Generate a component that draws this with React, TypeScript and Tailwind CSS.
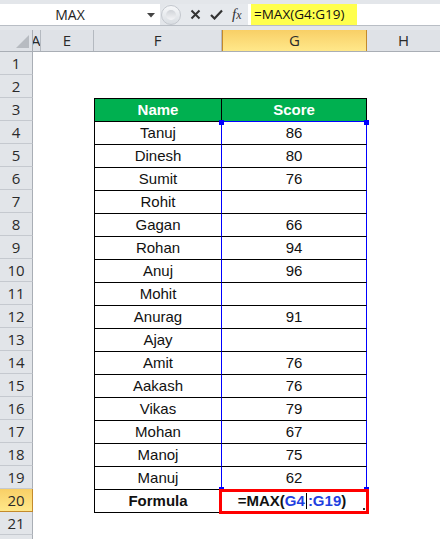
import React from 'react'

const font = { fontFamily: '"Liberation Sans", Arial, sans-serif' }
const uiFont = { fontFamily: '"Open Sans", "Noto Sans", sans-serif' }

const people: [string, string][] = [
  ['Tanuj', '86'],
  ['Dinesh', '80'],
  ['Sumit', '76'],
  ['Rohit', ''],
  ['Gagan', '66'],
  ['Rohan', '94'],
  ['Anuj', '96'],
  ['Mohit', ''],
  ['Anurag', '91'],
  ['Ajay', ''],
  ['Amit', '76'],
  ['Aakash', '76'],
  ['Vikas', '79'],
  ['Mohan', '67'],
  ['Manoj', '75'],
  ['Manuj', '62'],
]

function FormulaBar() {
  return (
    <div className="h-[30px] bg-[#e3e6ea] pt-[4px]">
      <div className="flex h-[22px] border-b border-[#b9bec5]">
        {/* name box */}
        <div className="relative flex w-[160px] items-center justify-center bg-white pr-[20px] text-[14px] text-[#1e1e1e]" style={uiFont}>
          MAX
          <svg className="absolute left-[147px] top-[9px]" width="8" height="5" viewBox="0 0 8 5">
            <path d="M0 0 L8 0 L4 4.5 Z" fill="#444" />
          </svg>
        </div>
        {/* buttons */}
        <div className="flex w-[88px] items-center rounded-l-full bg-[#e6e9ed]">
          <div className="ml-[1px] h-[20px] w-[20px] rounded-full border border-[#c3c7cd] bg-gradient-to-b from-[#f7f8fa] to-[#d9dde2] p-[4px]">
            <div className="h-full w-full rounded-full bg-gradient-to-b from-[#d0d3d8] to-[#f4f5f7]" />
          </div>
          <svg className="ml-[9px]" width="11" height="11" viewBox="0 0 11 11">
            <path d="M1.5 1.5 L9.5 9.5 M9.5 1.5 L1.5 9.5" stroke="#333" strokeWidth="2" />
          </svg>
          <svg className="ml-[9px]" width="13" height="11" viewBox="0 0 13 11">
            <path d="M1 6 L4.5 9.5 L12 1.5" stroke="#333" strokeWidth="2.2" fill="none" />
          </svg>
          <span className="ml-[9px] text-[15px] italic text-[#333]" style={{ fontFamily: '"Liberation Serif", serif' }}>
            f<span className="text-[12px]">x</span>
          </span>
        </div>
        {/* formula input */}
        <div className="flex flex-1 items-center bg-white pl-[3px]">
          <div className="flex h-[21px] w-[106px] items-center bg-[#ffff4d] pl-[3px] text-[13.5px] text-[#111]" style={uiFont}>
            =MAX(G4:G19)
          </div>
        </div>
      </div>
    </div>
  )
}

function ColumnHeaders() {
  const cell = 'flex h-full items-center justify-center border-r border-[#b4b9c0] text-[15px] text-[#2a2a2a]'
  return (
    <div className="flex h-[22px] border-b border-[#a9aeb5] bg-[#dfe2e7]" style={uiFont}>
      <div className="relative h-full w-[33px] border-r border-[#a9aeb5]">
        <svg className="absolute bottom-[3px] right-[3px]" width="13" height="13" viewBox="0 0 13 13">
          <path d="M13 0 L13 13 L0 13 Z" fill="#b7bbc1" />
        </svg>
      </div>
      <div className={`${cell} w-[8px] justify-start overflow-hidden`}>
        <span className="-ml-[2px]">A</span>
      </div>
      <div className={`${cell} w-[53px]`}>E</div>
      <div className={`${cell} w-[128px]`}>F</div>
      <div className={`${cell} w-[145px] border-x border-[#c38a2c] bg-gradient-to-b from-[#f8cf66] to-[#ffe88a]`}>G</div>
      <div className="flex h-full flex-1 items-center justify-center text-[15px] text-[#2a2a2a]">H</div>
    </div>
  )
}

function RowHeader({ n }: { n: number }) {
  const active = n === 20
  return (
    <div
      className={`flex h-[23px] w-[33px] shrink-0 items-center justify-center border-b border-r text-[15px] ${
        active
          ? 'border-[#c38a2c] bg-gradient-to-b from-[#f8cf66] to-[#ffe88a] text-[#2a2a2a]'
          : 'border-b-[#c5c9cf] border-r-[#a9aeb5] bg-[#e2e5e9] text-[#2a2a2a]'
      }`}
      style={uiFont}
    >
      {n}
    </div>
  )
}

export default function App() {
  const rows = Array.from({ length: 22 }, (_, i) => i + 1)

  return (
    <div className="h-[539px] w-[440px] overflow-hidden bg-white">
      <FormulaBar />
      <ColumnHeaders />
      {rows.map((n) => {
        const inTable = n >= 3 && n <= 20
        const selected = n >= 4 && n <= 19
        const topLine = n >= 3 && n <= 21
        const person = selected ? people[n - 4] : null

        let fClass = 'w-[128px]'
        let gClass = 'w-[145px]'
        if (inTable) {
          fClass += ` border-l border-r border-t border-l-black border-t-black ${selected ? 'border-r-[#0000ff]' : 'border-r-black'}`
          gClass += ` border-r border-t ${selected ? 'border-r-[#0000ff]' : 'border-r-black'} ${n === 4 ? 'border-t-[#0000ff]' : 'border-t-black'}`
        } else if (topLine) {
          fClass += ' border-t border-black'
          gClass += ' border-t border-black'
        }
        if (n === 3) {
          fClass += ' bg-[#00b050] font-bold text-white'
          gClass += ' bg-[#00b050] font-bold text-white'
        }
        if (n === 20) fClass += ' font-bold'

        return (
          <div key={n} className="flex h-[23px]">
            <RowHeader n={n} />
            <div className="w-[8px]" />
            <div className="w-[53px]" />
            <div className={`flex items-center justify-center text-[15px] text-[#111] ${fClass}`} style={font}>
              {n === 3 ? 'Name' : n === 20 ? 'Formula' : person ? person[0] : ''}
            </div>
            <div className={`relative flex items-center justify-center text-[15px] text-[#111] ${gClass}`} style={font}>
              {n === 3 && 'Score'}
              {person && person[1]}
              {n === 4 && (
                <>
                  <div className="absolute left-[-3px] top-[-2px] h-[5px] w-[5px] bg-[#0000ff]" />
                  <div className="absolute right-[-3px] top-[-2px] h-[5px] w-[5px] bg-[#0000ff]" />
                </>
              )}
              {n === 19 && (
                <>
                  <div className="absolute bottom-[-3px] left-[-3px] h-[5px] w-[5px] bg-[#0000ff]" />
                  <div className="absolute bottom-[-3px] right-[-3px] h-[5px] w-[5px] bg-[#0000ff]" />
                </>
              )}
              {n === 20 && (
                <>
                  <span className="flex items-center pr-[4px] font-bold">
                    =MAX(
                    <span className="text-[#1f3fe0]">G4</span>
                    <span className="mx-[1px] h-[16px] w-[1px] bg-black" />
                    <span className="text-[#1f3fe0]">:G19</span>)
                  </span>
                  <div className="absolute left-[-3px] right-[-3px] top-[-1px] bottom-[-2px] z-10 border-[3px] border-[#ff0000]" />
                  <div className="absolute bottom-[2px] right-[1px] h-[2px] w-[2px] bg-[#333]" />
                </>
              )}
            </div>
            <div className="flex-1" />
          </div>
        )
      })}
    </div>
  )
}
